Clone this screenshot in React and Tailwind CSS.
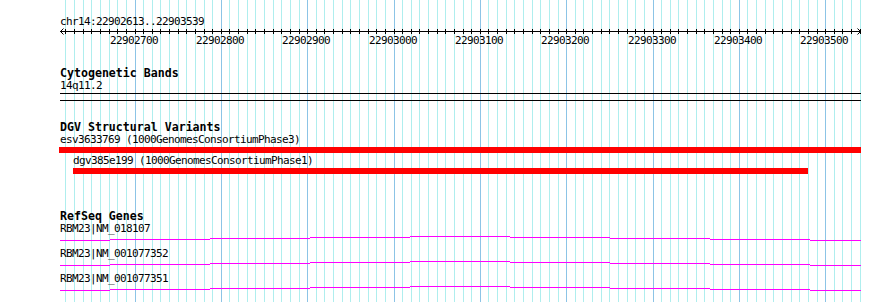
import React from 'react';

// genome browser snapshot: chr14:22902613..22903539
const START_BP = 22902700;
const START_X = 135;
const PX_PER_BP = 0.86338;

const bpToX = (bp) => START_X + (bp - START_BP) * PX_PER_BP;

const gridStops = [];
for (let bp = 22902620; bp <= 22903540; bp += 10) {
    gridStops.push({ bp, x: Math.floor(bpToX(bp)), major: bp % 100 === 0 });
}

const majorLabels = gridStops.filter(s => s.major && s.bp <= 22903500);

// stepped intron line shared by every transcript
const geneSteps = [
    [60, 110, 6], [110, 210, 5], [210, 310, 4], [310, 410, 3], [410, 510, 2],
    [510, 610, 3], [610, 710, 4], [710, 810, 5], [810, 861, 6],
];

const transcripts = ['RBM23|NM_018107', 'RBM23|NM_001077352', 'RBM23|NM_001077351'];

const GridLines = () => (
    <svg className="absolute inset-0" width="890" height="302">
        {gridStops.map(s => (
            <rect key={s.bp} x={s.x} y="0" width="1" height="302" fill={s.major ? '#8cc4e6' : '#afeeee'} />
        ))}
    </svg>
);

const Label = ({ children, indent = 'pl-[60px]', className = '' }) => (
    <div className={`h-[10px] leading-[10px] text-[11px] tracking-[-0.62px] whitespace-nowrap ${indent} ${className}`}>{children}</div>
);

const TrackTitle = ({ children, className = '' }) => (
    <div className={`h-[12px] leading-[12px] text-[11.6px] font-bold pl-[60px] whitespace-nowrap ${className}`}>{children}</div>
);

const Ruler = () => (
    <>
        <svg width="890" height="8" className="block">
            <rect x="60" y="4" width="801" height="1" fill="#000" />
            {gridStops.map(s => (
                <rect key={s.bp} x={s.x} y="2" width="1" height="5" fill="#000" />
            ))}
            <path d="M63.5 1.5 L60.5 4.5 L63.5 7.5" stroke="#000" fill="none" />
            <path d="M857.5 1.5 L860.5 4.5 L857.5 7.5" stroke="#000" fill="none" />
        </svg>
        <div className="relative h-[10px] mt-[1px] text-[11px] tracking-[-0.62px] leading-[10px]">
            {majorLabels.map(s => (
                <span key={s.bp} className="absolute top-0" style={{ left: s.x - 25 }}>{s.bp}</span>
            ))}
        </div>
    </>
);

const Bar = ({ x1, x2 }) => (
    <svg width="890" height="10" className="block">
        <rect x={x1} y="2" width={x2 - x1} height="6" fill="#ff0000" />
    </svg>
);

const Transcript = ({ name }) => (
    <div>
        <Label>{name}</Label>
        <svg width="890" height="15" className="block">
            {geneSteps.map(([a, b, y]) => (
                <rect key={a} x={a} y={y} width={b - a} height="1" fill="#ff00ff" />
            ))}
        </svg>
    </div>
);

export default function App() {
    return (
        <div className="relative w-[890px] h-[302px] overflow-hidden bg-white text-black font-['DejaVu_Sans_Mono',monospace]">
            <GridLines />
            <div className="relative flex flex-col pt-[17px]">
                {/* ruler */}
                <Label>chr14:22902613..22903539</Label>
                <Ruler />

                {/* cytoband */}
                <TrackTitle className="mt-[21px]">Cytogenetic Bands</TrackTitle>
                <Label className="mt-[2px]">14q11.2</Label>
                <svg width="890" height="10" className="block">
                    <rect x="60" y="2" width="801" height="1" fill="#000" />
                    <rect x="60" y="9" width="801" height="1" fill="#000" />
                </svg>

                {/* structural variants */}
                <TrackTitle className="mt-[20px]">DGV Structural Variants</TrackTitle>
                <Label className="mt-[2px]">esv3633769 (1000GenomesConsortiumPhase3)</Label>
                <Bar x1={59} x2={861} />
                <Label indent="pl-[73px]" className="mt-[1px]">dgv385e199 (1000GenomesConsortiumPhase1)</Label>
                <Bar x1={73} x2={808} />

                {/* genes */}
                <TrackTitle className="mt-[34px]">RefSeq Genes</TrackTitle>
                <div className="mt-[2px]">
                    {transcripts.map(t => <Transcript key={t} name={t} />)}
                </div>
            </div>
        </div>
    );
}
